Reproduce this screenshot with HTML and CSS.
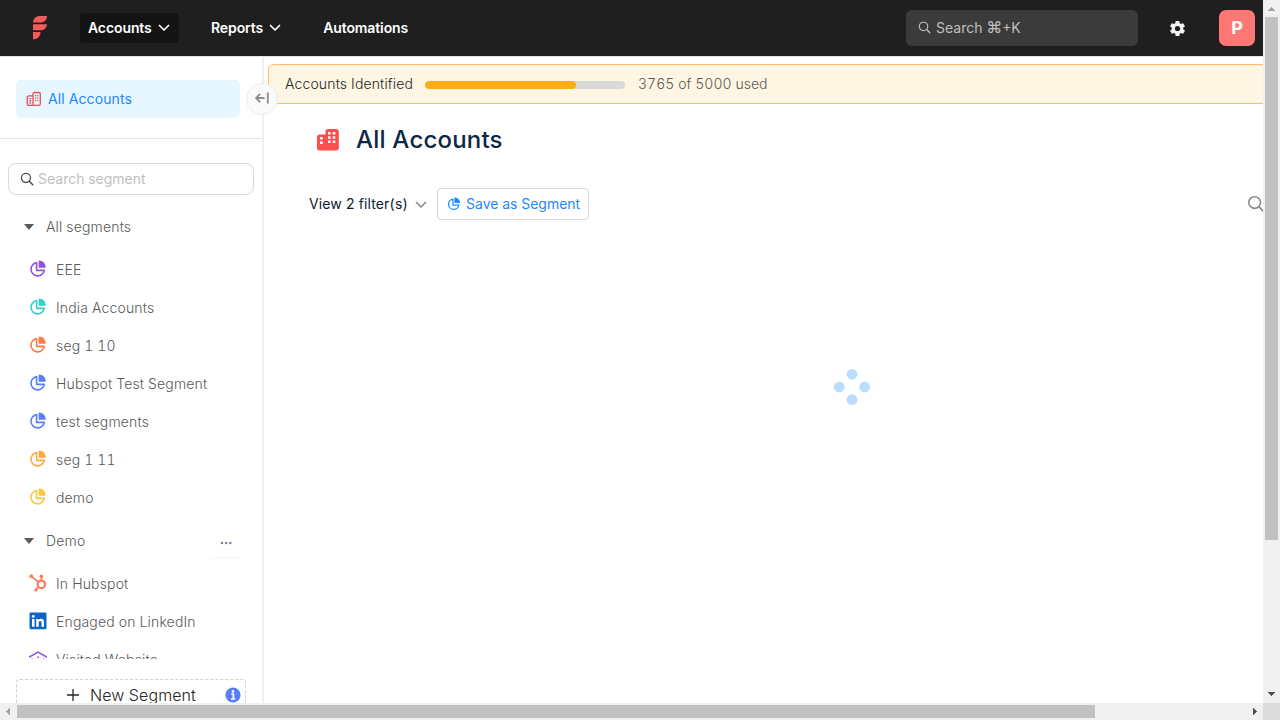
FILE: index.html
```html
<!DOCTYPE html>
<html lang="en">
<head>
<meta charset="utf-8">
<title>All Accounts</title>
<link rel="stylesheet" href="styles.css">
</head>
<body>
<svg class="defs" width="0" height="0">
  <symbol id="pie" viewBox="0 0 18 18">
    <path d="M7.600 2.600A6.700 6.700 0 1 0 15.300 10.400H7.600z" fill="none" stroke="currentColor" stroke-width="1.600" stroke-linejoin="round"/>
    <path d="M9.600 1.200c0-.4.300-.6.700-.6 3.300 0 6.100 2.800 6.400 6.400 0 .4-.3.700-.7.700H9.600z" fill="currentColor"/>
  </symbol>
  <symbol id="chevron" viewBox="0 0 12 8">
    <path d="M1.500 1.500 6 6l4.500-4.500" fill="none" stroke="currentColor" stroke-width="1.700" stroke-linecap="round" stroke-linejoin="round"/>
  </symbol>
  <symbol id="search" viewBox="0 0 16 16">
    <circle cx="6.800" cy="6.700" r="5.200" fill="none" stroke="currentColor" stroke-width="1.400"/>
    <path d="m10.600 10.500 4 4" fill="none" stroke="currentColor" stroke-width="1.600" stroke-linecap="round"/>
  </symbol>
</svg>
<div class="window">
  <div class="viewport">
    <header class="topbar">
      <svg class="logo" width="16" height="26" viewBox="0 0 16 26">
        <path d="M1 7.500C1.300 3.300 4 1 8 1h7c0 4-2.500 6.500-6.500 6.500zM1 9.200h14c-.5 4-3 6-6.500 6H1zM1 17h7.500c0 4-2.500 7.300-7.500 7.300z" fill="#f05b5b"/>
      </svg>
      <nav class="nav">
        <a class="nav-item active">Accounts<svg width="12" height="8"><use href="#chevron"/></svg></a>
        <a class="nav-item">Reports<svg width="12" height="8"><use href="#chevron"/></svg></a>
        <a class="nav-item">Automations</a>
      </nav>
      <div class="global-search"><svg width="13" height="13"><use href="#search"/></svg><span>Search <span class="key">⌘</span>+K</span></div>
      <svg class="gear" width="19" height="19" viewBox="0 0 24 24"><path fill="#f2f2f2" fill-rule="evenodd" d="M19.140 12.940c.04-.3.060-.61.060-.94s-.02-.64-.07-.94l2.030-1.580a.49.49 0 0 0 .12-.61l-1.920-3.320a.488.488 0 0 0-.59-.22l-2.390.96c-.5-.38-1.030-.7-1.620-.94l-.36-2.540a.484.484 0 0 0-.48-.41h-3.840c-.24 0-.43.170-.47.410l-.36 2.540c-.59.240-1.130.570-1.620.940l-2.390-.96a.476.476 0 0 0-.59.220L2.740 8.870c-.12.210-.08.470.120.610l2.030 1.580c-.05.300-.09.630-.09.940s.02.640.070.940l-2.030 1.580a.49.49 0 0 0-.12.610l1.920 3.320c.12.220.37.290.59.220l2.390-.96c.5.380 1.030.7 1.620.94l.36 2.540c.05.240.24.410.48.410h3.840c.24 0 .44-.17.470-.41l.36-2.540c.59-.24 1.130-.56 1.620-.94l2.390.96c.22.080.47 0 .59-.22l1.920-3.320a.49.49 0 0 0-.12-.61zM12 15.300a3.300 3.300 0 1 1 0-6.600 3.300 3.300 0 0 1 0 6.600z"/></svg>
      <div class="avatar">P</div>
    </header>
    <div class="workspace">
      <aside class="sidebar">
        <div class="pinned">
          <a class="all-accounts">
            <svg width="16" height="16" viewBox="0 0 16 16" fill="none" stroke="#ee4b57" stroke-width="1.300"><path d="M7 14.400H2.800a1.500 1.500 0 0 1-1.500-1.500V6.300a1.500 1.500 0 0 1 1.500-1.500H7"/><rect x="7" y="1.500" width="7.300" height="12.900" rx="1.600"/><path d="M3.300 7.600h1.900M3.300 10h1.900M3.300 12.200h1.900M9 4.700h1.200M11.200 4.700h1.200M9 7.200h1.200M11.200 7.200h1.200M9 9.700h1.200M11.200 9.700h1.200"/></svg>
            <span>All Accounts</span>
          </a>
        </div>
        <div class="segment-search"><svg width="14" height="14"><use href="#search"/></svg><span>Search segment</span></div>
        <div class="segments">
          <div class="group"><i class="caret"></i><span>All segments</span></div>
          <a class="segment"><svg class="purple" width="18" height="18"><use href="#pie"/></svg><span>EEE</span></a>
          <a class="segment"><svg class="teal" width="18" height="18"><use href="#pie"/></svg><span>India Accounts</span></a>
          <a class="segment"><svg class="coral" width="18" height="18"><use href="#pie"/></svg><span>seg 1 10</span></a>
          <a class="segment"><svg class="blue" width="18" height="18"><use href="#pie"/></svg><span>Hubspot Test Segment</span></a>
          <a class="segment"><svg class="blue" width="18" height="18"><use href="#pie"/></svg><span>test segments</span></a>
          <a class="segment"><svg class="orange" width="18" height="18"><use href="#pie"/></svg><span>seg 1 11</span></a>
          <a class="segment"><svg class="yellow" width="18" height="18"><use href="#pie"/></svg><span>demo</span></a>
          <div class="group second"><i class="caret"></i><span>Demo</span>
            <button class="more"><svg width="12" height="4" viewBox="0 0 12 4" fill="#7a8499"><circle cx="2" cy="2" r="1.300"/><circle cx="6.200" cy="2" r="1.300"/><circle cx="10.300" cy="2" r="1.300"/></svg></button>
          </div>
          <a class="segment"><svg width="18" height="18" viewBox="0 0 18 18" fill="none" stroke="#ff7a59"><circle cx="12.400" cy="10.400" r="3.700" stroke-width="2.200"/><path d="M2.500 2.600 9.400 7.800M12.400 6.500V2.500M9.600 13l-2.500 2.600" stroke-width="1.700"/><g fill="#ff7a59" stroke="none"><circle cx="2.300" cy="2.200" r="1.900"/><circle cx="12.400" cy="2.400" r="1.800"/><circle cx="7" cy="15.900" r="1.600"/></g></svg><span>In Hubspot</span></a>
          <a class="segment"><svg width="18" height="18" viewBox="0 0 18 18"><rect x=".5" y=".5" width="17" height="16.800" rx="1.200" fill="#0a66c2"/><path fill="#fff" d="M3 7h2.500v7.800H3zM7.200 7h2.400v1.100c.4-.7 1.200-1.300 2.400-1.300 2.500 0 3 1.600 3 3.700v4.300h-2.500V11c0-.9 0-2.100-1.300-2.100S9.700 9.900 9.700 11v3.800H7.200z"/><circle cx="4.250" cy="4.400" r="1.450" fill="#fff"/></svg><span>Engaged on LinkedIn</span></a>
          <a class="segment"><svg width="18" height="18" viewBox="0 0 18 18" fill="none" stroke="#9254de" stroke-width="1.500" stroke-linecap="round"><path d="M.3 7 9 2.100 17.700 7M3 9v7h12V9"/><circle cx="9" cy="7.200" r=".9" fill="#9254de" stroke="none"/></svg><span>Visited Website</span></a>
        </div>
        <div class="new-segment">
          <svg width="14" height="14" viewBox="0 0 14 14"><path d="M7 1v12M1 7h12" stroke="#262626" stroke-width="1.300"/></svg>
          <span>New Segment</span>
          <svg class="info" width="16" height="16" viewBox="0 0 16 16"><circle cx="8" cy="8" r="7.600" fill="#597ef7"/><circle cx="8" cy="4.400" r="1.300" fill="#fff"/><path d="M6.200 7h2.200v4.800M6 12h4.300" stroke="#fff" stroke-width="1.700" fill="none"/></svg>
        </div>
        <button class="collapse"><svg width="16" height="14" viewBox="0 0 16 14" fill="none" stroke="#8c8c8c" stroke-width="1.800"><path d="M10.500 7H2.500M6.200 2.800 2 7l4.200 4.200M13.800 1.500v11"/></svg></button>
      </aside>
      <main class="main">
        <div class="quota">
          <span class="quota-label">Accounts Identified</span>
          <div class="progress"><div class="progress-fill" style="width:75.3%"></div></div>
          <span class="quota-value">3765 of 5000 used</span>
        </div>
        <div class="title">
          <svg width="24" height="24" viewBox="0 0 24 24"><path fill="#ff4d4f" d="M3.500 6.500H9.500V3.500Q9.500 1 12 1h8.500Q22.800 1 22.800 3.500v16.800q0 2.300-2.500 2.300h-17Q1 22.600 1 20.300V8.800Q1 6.500 3.500 6.500z"/><path fill="#fff" d="M4 9h2.800v2.600H4zM4 13.500h2.800v2.600H4zM12 4h2.600v2.500H12zM16.700 4h2.600v2.500h-2.600zM12 8.200h2.600v2.500H12zM16.700 8.200h2.600v2.500h-2.600zM12 12.400h2.600v2.500H12zM16.700 12.400h2.600v2.500h-2.600z"/></svg>
          <h1>All Accounts</h1>
        </div>
        <div class="toolbar">
          <span class="filters">View 2 filter(s)<svg width="12" height="8"><use href="#chevron"/></svg></span>
          <button class="save"><svg width="14" height="14"><use href="#pie"/></svg><span>Save as Segment</span></button>
          <svg class="table-search" width="18" height="18"><use href="#search"/></svg>
        </div>
        <div class="loading">
          <svg width="38" height="38" viewBox="0 0 38 38" fill="#badeff"><circle cx="19" cy="6.300" r="5.400"/><circle cx="6.300" cy="19" r="5.400"/><circle cx="31.700" cy="19" r="5.400"/><circle cx="19" cy="31.700" r="5.400"/></svg>
        </div>
      </main>
    </div>
  </div>
  <div class="vscroll"><svg width="17" height="17" shape-rendering="crispEdges"><path d="M5 11h7L8.500 7z" fill="#a3a3a3"/></svg><div class="vthumb"></div><svg class="end" width="17" height="17" shape-rendering="crispEdges"><path d="M5 6h7l-3.500 4z" fill="#505050"/></svg></div>
  <div class="hscroll"><svg width="17" height="17" shape-rendering="crispEdges"><path d="M10 5v7L6 8.500z" fill="#a3a3a3"/></svg><div class="hthumb"></div><svg class="end" width="17" height="17" shape-rendering="crispEdges"><path d="M7 5v7l4-3.500z" fill="#505050"/></svg></div>
  <div class="corner"></div>
</div>
</body>
</html>
```
FILE: styles.css
```css
* { box-sizing: border-box; }
body { margin: 0; overflow: hidden; background: #fff; font-family: Inter, "Liberation Sans", sans-serif; font-size: 14px; font-variant-numeric: tabular-nums; color: #595959; }
svg { display: block; flex: none; }
.defs { position: absolute; }
span { white-space: nowrap; }
button { font: inherit; padding: 0; letter-spacing: inherit; }
.window { display: grid; width: 1280px; height: 720px; grid-template: 703px 17px / 1263px 17px; }
.viewport { overflow: hidden; display: flex; flex-direction: column; }

.topbar { height: 56px; flex: none; background: #1f1f1f; display: flex; align-items: center; padding: 0 8px 0 32px; color: #fff; }
.nav { display: flex; gap: 24px; margin-left: 32px; }
.nav-item { display: flex; align-items: center; gap: 6px; height: 30px; padding: 0 10px 0 8px; border-radius: 4px; font-weight: 600; line-height: 22px; letter-spacing: -.1px; }
.nav-item.active { background: #141414; width: 99px; }
.global-search { width: 232px; height: 36px; margin-left: auto; border-radius: 6px; background: #3b3b3b; color: #bfbfbf; display: flex; align-items: center; gap: 5px; padding: 0 0 1px 12px; }
.key { font-size: 16px; line-height: 14px; }
.gear { margin-left: 30px; }
.avatar { width: 36px; height: 36px; margin-left: 32px; border-radius: 7px; background: #ff7875; font-size: 18px; font-weight: 700; line-height: 20px; padding-bottom: 1px; display: flex; align-items: center; justify-content: center; }

.workspace { flex: 1; min-height: 0; display: flex; border-top: 1px solid #e3e3e3; }
.sidebar { position: relative; width: 264px; flex: none; border-right: 2px solid #f0f0f0; display: flex; flex-direction: column; font-weight: 300; letter-spacing: .16px; }
.pinned { height: 82px; flex: none; padding: 23px 22px 0 16px; border-bottom: 1px solid #dde4ec; }
.all-accounts { height: 38px; border-radius: 5px; background: #e6f7ff; color: #1e88ff; display: flex; align-items: center; gap: 6px; padding: 0 0 1px 10px; font-weight: 400; letter-spacing: .12px; }
.segment-search { height: 32px; flex: none; margin: 24px 8px 0; border: 1px solid #d9d9d9; border-radius: 8px; display: flex; align-items: center; gap: 4px; padding: 0 0 1px 11px; color: #bfbfbf; font-weight: 400; letter-spacing: 0; }
.segment-search svg { color: #434343; }
.segments { height: 464px; flex: none; overflow: hidden; padding-top: 11px; }
.group { height: 40px; display: flex; align-items: center; gap: 12px; padding-left: 24px; margin-bottom: 4px; }
.caret { width: 10px; border: 5px solid transparent; border-top: 6px solid #595959; border-bottom: 0; margin-top: 1px; }
.second { margin-top: 4px; }
.more { align-self: flex-start; width: 32px; height: 32px; margin: 7px 20px 0 auto; border: 0; border-bottom: 2px solid #fafafa; border-radius: 4px; background: none; display: flex; align-items: center; justify-content: center; }
.more svg { margin-top: 2px; }
.segment { height: 38px; display: flex; align-items: center; gap: 9px; padding-left: 29px; }
.segment svg { margin-top: -1px; }
.purple { color: #9254de; } .teal { color: #36cfc9; } .coral { color: #ff7a45; } .blue { color: #597ef7; } .orange { color: #ffa940; } .yellow { color: #ffc53d; }
.new-segment { position: relative; width: 230px; height: 32px; flex: none; margin: 20px 0 0 16px; border: 1px dashed #d0d0d0; border-radius: 4px; display: flex; align-items: center; justify-content: center; gap: 10px; font-size: 16px; letter-spacing: .1px; color: #262626; }
.info { position: absolute; right: 4px; top: 7px; }
.collapse { position: absolute; z-index: 2; right: -16px; top: 26px; width: 32px; height: 32px; border: 1px solid #ececec; border-radius: 50%; background: #fafafa; display: flex; align-items: center; justify-content: center; }
.collapse svg { margin-top: -2px; }

.main { flex: none; width: 1176px; display: flex; flex-direction: column; }
.quota { height: 40px; margin: 7px 0 0 4px; border: 1px solid #ffc069; border-radius: 6px; background: #fff5e3; display: flex; align-items: center; gap: 12px; padding: 0 0 1px 16px; font-weight: 300; letter-spacing: .14px; }
.quota-label { color: #262626; }
.quota-value { margin-left: 1px; letter-spacing: .04px; }
.progress { width: 200px; height: 8px; margin-top: 3px; border-radius: 4px; background: #d9d9d9; overflow: hidden; }
.progress-fill { height: 100%; border-radius: 4px; background: #faad14; }
.title { display: flex; align-items: center; gap: 17px; height: 40px; margin: 16px 0 0 52px; }
h1 { margin: 0 0 0 -1px; font-size: 24px; font-weight: 500; line-height: 32px; letter-spacing: .2px; color: #0e2647; }
.toolbar { display: flex; align-items: center; height: 32px; margin: 28px 0 0 45px; }
.filters { display: flex; align-items: center; gap: 7px; width: 117px; padding-bottom: 1px; color: #0a1a33; letter-spacing: .1px; }
.filters svg { color: #8c8c8c; margin-top: 2px; }
.save { width: 152px; height: 32px; margin-left: 11px; border: 1px solid #d9d9d9; border-radius: 4px; background: #fff; color: #1e88ff; display: flex; align-items: center; gap: 5px; padding: 0 0 1px 9px; }
.save svg { color: #1890ff; }
.table-search { margin: -1px 0 0 658px; color: #8c8c8c; }
.loading { display: flex; justify-content: center; margin-top: 148px; }

.vscroll { background: #f0f0f0; display: flex; flex-direction: column; align-items: center; }
.vthumb { width: 13px; height: 523px; background: #c1c1c1; }
.vscroll .end { margin-top: auto; }
.hscroll { background: #f0f0f0; display: flex; align-items: center; }
.hthumb { width: 1078px; height: 13px; background: #c1c1c1; }
.hscroll .end { margin-left: auto; }
.corner { background: #dcdcdc; }
```
